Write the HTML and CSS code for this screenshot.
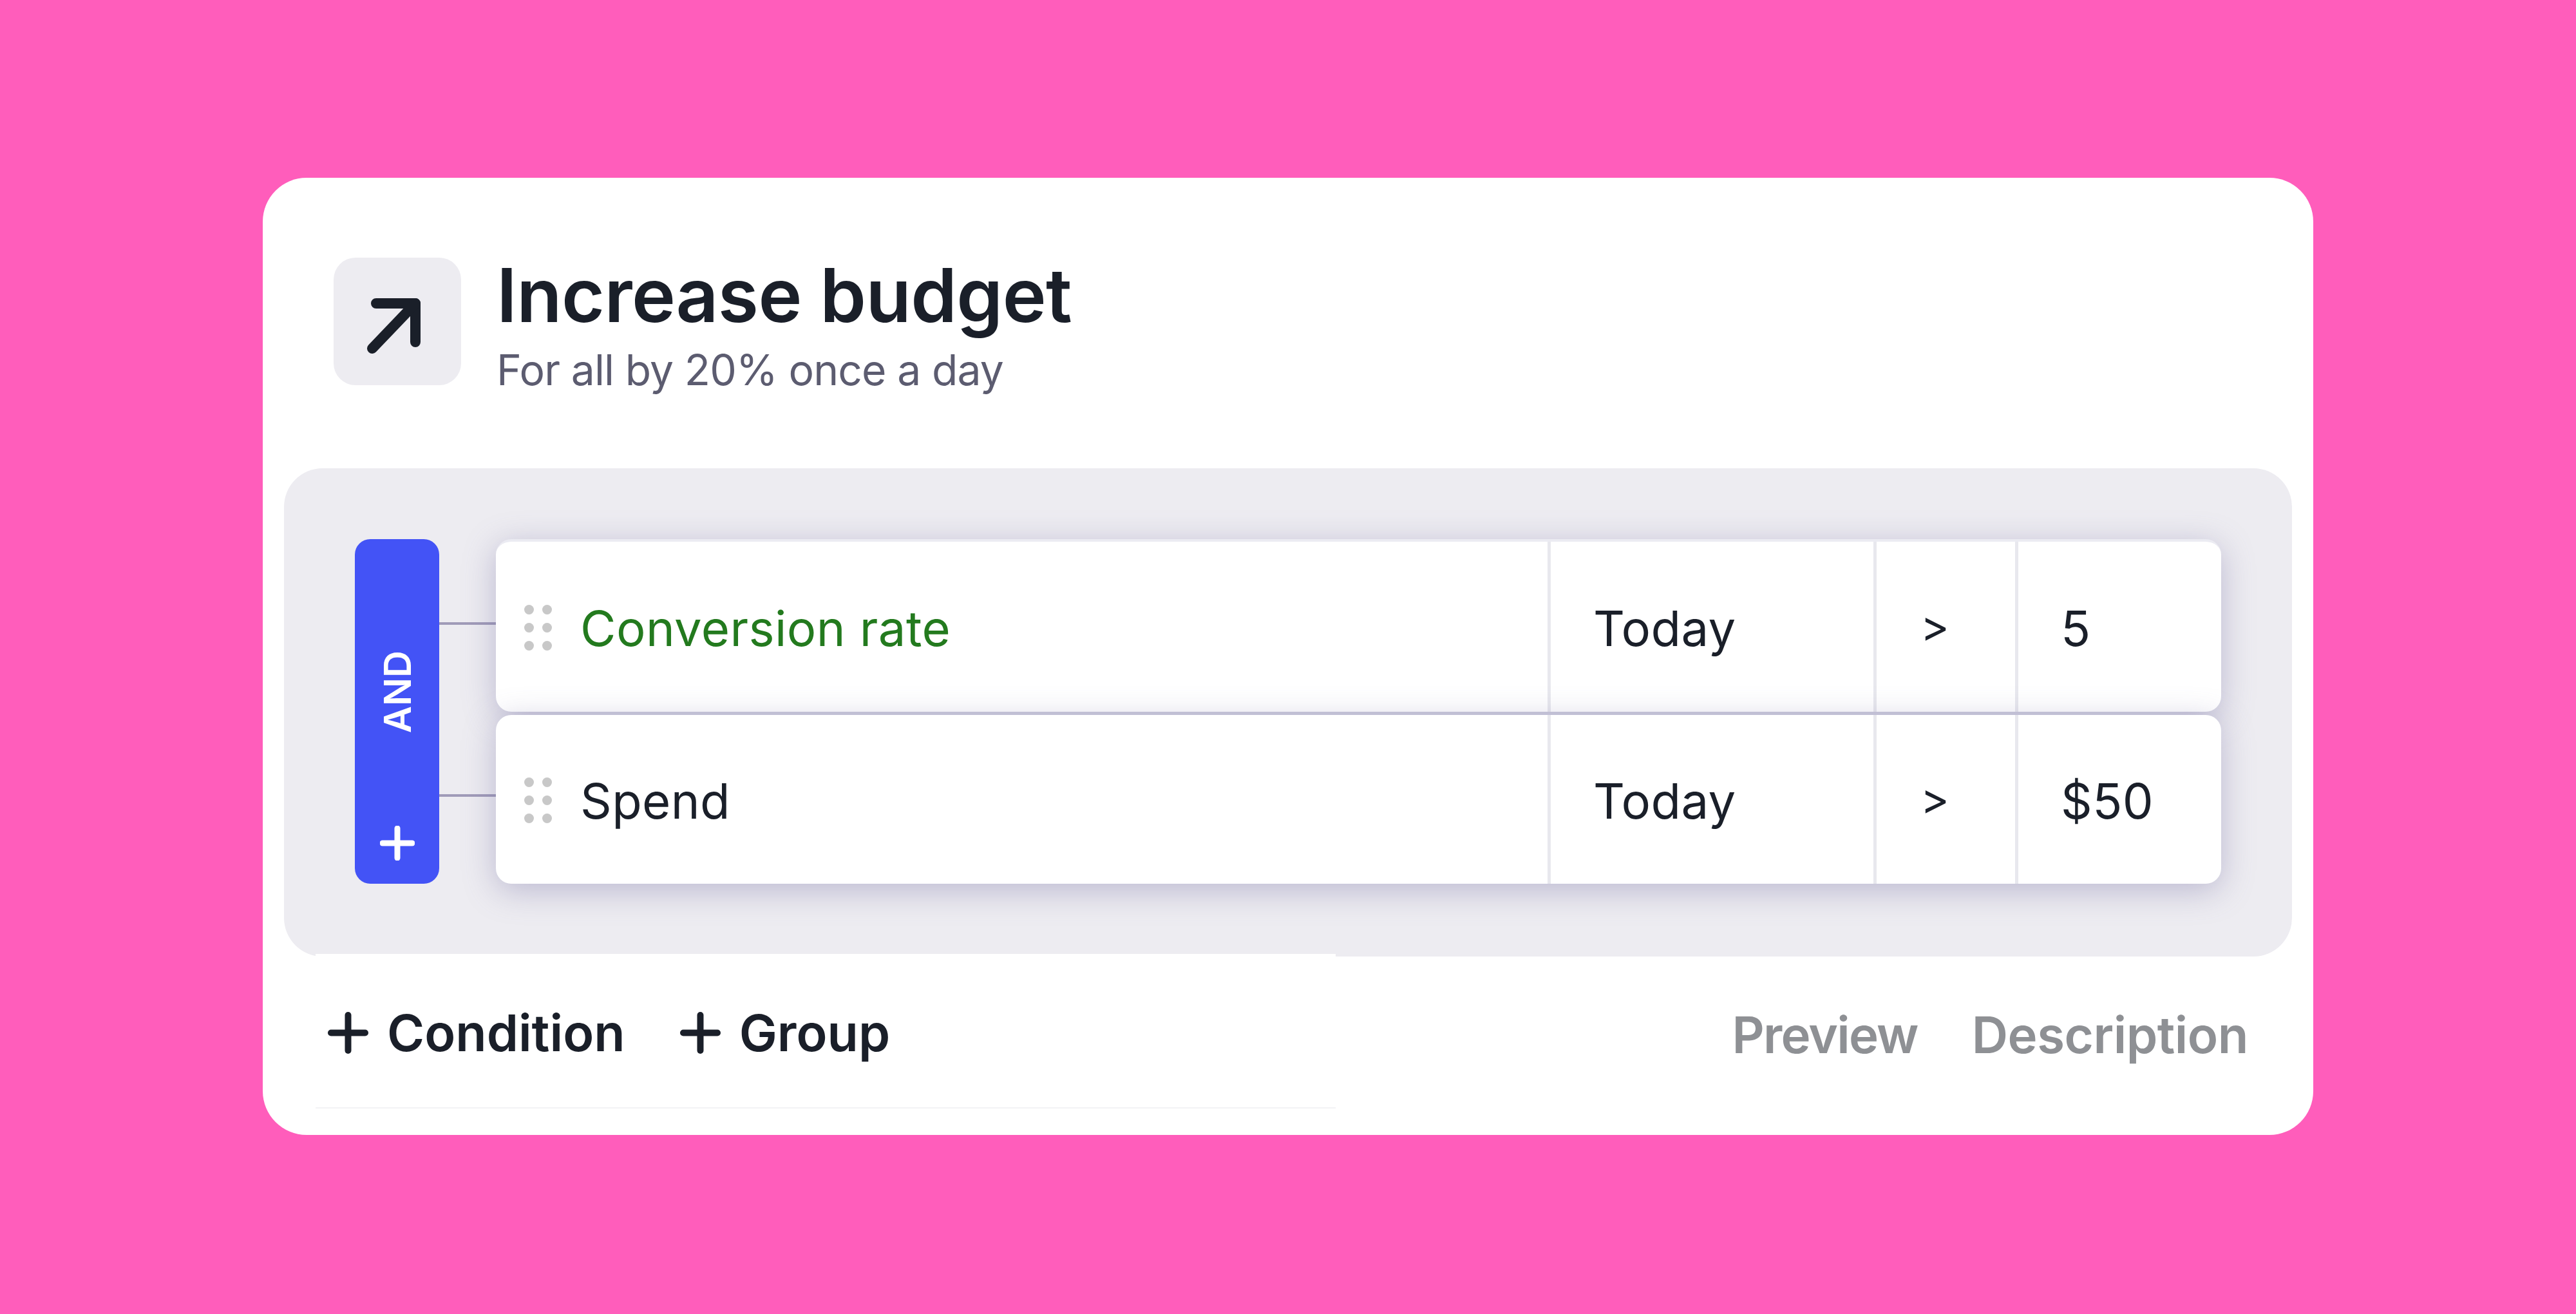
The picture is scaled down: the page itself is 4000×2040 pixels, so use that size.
FILE: index.html
```html
<!DOCTYPE html>
<html lang="en">

<head>
    <meta charset="UTF-8">
    <title>Increase budget</title>
    <link rel="stylesheet" href="styles.css">
</head>

<body>
    <div class="card">
        <header class="head">
            <div class="head-icon">
                <svg width="198" height="198" viewBox="0 0 198 198" fill="none" stroke="#1a1f29" stroke-width="16" stroke-linecap="round" stroke-linejoin="round">
                    <path d="M66 71H127V131"/>
                    <path d="M127 71L60 141"/>
                </svg>
            </div>
            <div class="head-text">
                <h1>Increase budget</h1>
                <p>For all by 20% once a day</p>
            </div>
        </header>

        <section class="panel">
            <div class="and-bar">
                <span class="and-label">AND</span>
                <svg class="and-plus" width="54" height="54" viewBox="0 0 54 54" stroke="#fff" stroke-width="9" stroke-linecap="round">
                    <path d="M27 4V50"/>
                    <path d="M4 27H50"/>
                </svg>
            </div>
            <div class="rows">
                <div class="row row-first">
                    <div class="link"></div>
                    <div class="row-card">
                        <div class="cell cell-name">
                            <div class="dots"><i></i><i></i><i></i><i></i><i></i><i></i></div>
                            <span class="metric">Conversion rate</span>
                        </div>
                        <div class="cell cell-period">Today</div>
                        <div class="cell cell-op">&gt;</div>
                        <div class="cell cell-value">5</div>
                    </div>
                </div>
                <div class="row row-second">
                    <div class="link"></div>
                    <div class="row-card">
                        <div class="cell cell-name">
                            <div class="dots"><i></i><i></i><i></i><i></i><i></i><i></i></div>
                            <span>Spend</span>
                        </div>
                        <div class="cell cell-period">Today</div>
                        <div class="cell cell-op">&gt;</div>
                        <div class="cell cell-value">$50</div>
                    </div>
                </div>
            </div>
        </section>

        <footer class="foot">
            <div class="foot-left">
                <a class="add add-condition">
                    <svg width="63" height="65" viewBox="0 0 63 65" stroke="#1a1f29" stroke-width="10" stroke-linecap="round">
                        <path d="M31.5 5V60"/>
                        <path d="M5 32.5H58"/>
                    </svg>
                    Condition
                </a>
                <a class="add">
                    <svg width="63" height="65" viewBox="0 0 63 65" stroke="#1a1f29" stroke-width="10" stroke-linecap="round">
                        <path d="M31.5 5V60"/>
                        <path d="M5 32.5H58"/>
                    </svg>
                    Group
                </a>
            </div>
            <div class="foot-right">
                <a class="link-preview">Preview</a>
                <a>Description</a>
            </div>
        </footer>
    </div>
</body>

</html>
```

FILE: styles.css
```css
body {
    margin: 0;
    padding: 276px 408px;
    height: 2040px;
    box-sizing: border-box;
    background-color: #ff5dbb;
    font-family: Inter, "Liberation Sans", sans-serif;
    color: #1a1f29;
}

.card {
    height: 1486px;
    background-color: #fff;
    border-radius: 68px;
    overflow: hidden;
}

/* header */
.head {
    display: flex;
    height: 327px;
    padding: 124px 0 0 110px;
    gap: 55px;
}

.head-icon {
    width: 198px;
    height: 198px;
    background-color: #edecf1;
    border-radius: 34px;
}

.head-text {
    margin-top: -6px;
}

h1 {
    margin: 0;
    font-size: 115px;
    line-height: 130px;
    font-weight: 600;
    letter-spacing: -0.6px;
}

.head-text p {
    margin: 10px 0 0;
    font-size: 66px;
    line-height: 80px;
    letter-spacing: -0.9px;
    color: #5c5c70;
}

/* grey panel with the conditions */
.panel {
    display: flex;
    height: 758px;
    box-sizing: border-box;
    margin: 0 33px;
    padding: 110px;
    background-color: #edecf1;
    border-radius: 60px;
}

.and-bar {
    width: 131px;
    height: 535px;
    display: flex;
    flex-direction: column;
    align-items: center;
    background-color: #4353f6;
    border-radius: 24px;
    color: #fff;
}

.and-label {
    margin-top: 173px;
    writing-mode: vertical-rl;
    transform: rotate(180deg);
    font-size: 58px;
    line-height: 70px;
    font-weight: 600;
}

.and-plus {
    margin-top: 144px;
}

.rows {
    flex: 1;
    display: flex;
    flex-direction: column;
    gap: 5px;
}

.row {
    display: flex;
    align-items: center;
}

.link {
    width: 88px;
    height: 4px;
    background-color: #a09bb8;
}

.row-first .link {
    margin-bottom: 6px;
}

.row-second .link {
    margin-bottom: 12px;
}

.row-card {
    flex: 1;
    display: flex;
    background-color: #fff;
    border-radius: 24px;
    box-shadow: 0 10px 50px rgba(105, 100, 155, 0.38);
    font-size: 76px;
    letter-spacing: 0.4px;
}

.row-first .row-card {
    height: 268px;
    border-top: 4px solid #ebebf2;
    box-sizing: border-box;
}

.row-second .row-card {
    height: 262px;
}

.cell {
    display: flex;
    align-items: center;
    box-sizing: border-box;
    border-right: 5px solid #e8e8ee;
    padding-top: 3px;
    padding-left: 66px;
}

.cell-name {
    flex: 1;
    padding-left: 44px;
}

.cell-period {
    width: 506px;
}

.cell-op {
    width: 220px;
    font-size: 68px;
    padding-left: 68px;
    padding-top: 0;
    padding-bottom: 4px;
}

.cell-value {
    width: 315px;
    border-right: 0;
}

.metric {
    color: #237a1e;
}

.dots {
    display: grid;
    grid-template-columns: 15px 15px;
    gap: 13px;
    margin-right: 44px;
}

.dots i {
    width: 15px;
    height: 15px;
    border-radius: 50%;
    background-color: #c8c8c8;
}

/* footer */
.foot {
    display: flex;
    margin-left: 82px;
}

.foot-left {
    position: relative;
    display: flex;
    width: 1584px;
    height: 240px;
    box-sizing: border-box;
    margin-top: -4px;
    padding: 72px 0 0 19px;
    gap: 85px;
    background-color: #fff;
    border-bottom: 2px solid #f3f3f5;
}

.add {
    display: flex;
    align-items: center;
    gap: 29px;
    height: 100px;
    font-size: 79px;
    line-height: 100px;
    font-weight: 600;
}

.foot-right {
    flex: 1;
    display: flex;
    justify-content: flex-end;
    gap: 84px;
    padding: 72px 101px 0 0;
    font-size: 78px;
    line-height: 100px;
    font-weight: 600;
    letter-spacing: -0.5px;
    color: #8e9094;
}

.link-preview {
    letter-spacing: -1.8px;
}
```
